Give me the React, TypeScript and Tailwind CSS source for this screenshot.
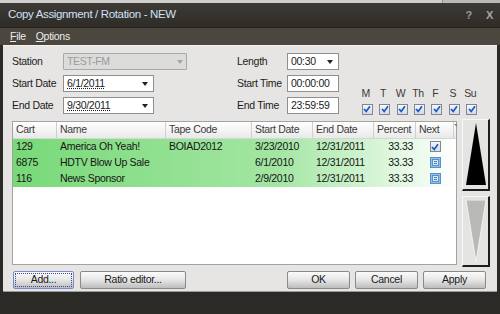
function DropArrow() {
    return <span className="ml-auto w-0 h-0 border-x-[3px] border-x-transparent border-t-[4px] border-t-[#222]" />
}

function Check() {
    return (
        <span className="w-[11px] h-[11px] border border-[#7f8794] bg-gradient-to-b from-[#f5f7fa] to-[#d5dbe4] flex items-center justify-center">
            <svg width="8" height="8" viewBox="0 0 8 8">
                <path d="M1 4 L3.2 6.4 L7 1.2" stroke="#1b58c4" strokeWidth="1.7" fill="none" />
            </svg>
        </span>
    )
}

function ListBox() {
    return (
        <span className="w-[11px] h-[11px] border border-[#5d8fc7] bg-[#8cc0ef] flex items-center justify-center">
            <span className="w-[7px] h-[7px] bg-[#d6ebfb] border border-[#5d8fc7] flex flex-col justify-center gap-[1px] px-[1px]">
                <span className="h-[1px] bg-[#4a7fb8]" />
                <span className="h-[1px] bg-[#4a7fb8]" />
            </span>
        </span>
    )
}

function Button({ label, w, focus }: { label: string; w: string; focus?: boolean }) {
    return (
        <div className={`${w} h-[18px] rounded-[2px] border ${focus ? "border-[#7a8cc8]" : "border-[#8a8a8a]"} bg-gradient-to-b from-[#fbfbfb] via-[#e6e6e6] to-[#bdbdbd] flex items-center justify-center text-[#1a1a1a] p-[1px]`}>
            <div className={`w-full h-full flex items-center justify-center ${focus ? "border border-dotted border-[#3a4a9a]" : ""}`}>
                {label}
            </div>
        </div>
    )
}

const rows = [
    { cart: "129", name: "America Oh Yeah!", tape: "BOIAD2012", start: "3/23/2010", end: "12/31/2011", pct: "33.33", next: true },
    { cart: "6875", name: "HDTV Blow Up Sale", tape: "", start: "6/1/2010", end: "12/31/2011", pct: "33.33", next: false },
    { cart: "116", name: "News Sponsor", tape: "", start: "2/9/2010", end: "12/31/2011", pct: "33.33", next: false },
]

const cols = [
    { label: "Cart", w: "w-[44px]" },
    { label: "Name", w: "w-[109px]" },
    { label: "Tape Code", w: "w-[86px]" },
    { label: "Start Date", w: "w-[61px]" },
    { label: "End Date", w: "w-[61px]" },
    { label: "Percent", w: "w-[42px]" },
    { label: "Next", w: "w-[38px]" },
]

export default function App() {
    return (
        <div className="w-[500px] h-[314px] overflow-hidden flex flex-col bg-[#2c2a27] font-['Liberation_Sans',Arial,sans-serif] text-[10.5px] tracking-[-0.3px] leading-none">
            <div className="h-[3px] bg-[#cfcfcd] flex justify-end">
                <div className="w-[58px] h-[3px] bg-[#b9b9b6] border-l border-[#8d8d8a]" />
            </div>
            {/* title bar */}
            <div className="h-[25px] bg-gradient-to-b from-[#3e3b36] to-[#2f2c28] border-b border-[#24221f] flex items-center pl-[8px] pr-[7px]">
                <span className="text-[11.5px] tracking-[-0.35px] text-[#cfe0f6]">Copy Assignment / Rotation - NEW</span>
                <span className="ml-auto text-[11px] font-bold text-[#9a9a98]">?</span>
                <span className="ml-[14px] text-[11px] font-bold text-[#a6a6a4]">X</span>
            </div>
            {/* menu */}
            <div className="h-[17px] bg-[#4b463e] flex items-center gap-[10px] px-[10px] text-[#ececec]">
                <span><span className="underline">F</span>ile</span>
                <span><span className="underline">O</span>ptions</span>
            </div>
            {/* body */}
            <div className="h-[246px] mx-[3px] bg-[#e6e5e3] border-t border-[#f4f4f2] flex flex-col pt-[7px] pl-[9px] pr-[6px] text-[#1c1c1c]">
                <div className="flex">
                    <div className="flex flex-col gap-[5px] w-[175px]">
                        <div className="flex items-center h-[17px]">
                            <span className="w-[51px]">Station</span>
                            <div className="w-[124px] h-[17px] border border-[#a9a9a9] bg-[#dcdcdb] rounded-[1px] flex items-center px-[3px] text-[#9b9b9b]">
                                TEST-FM
                                <span className="ml-auto w-0 h-0 border-x-[3px] border-x-transparent border-t-[4px] border-t-[#a5a5a5]" />
                            </div>
                        </div>
                        <div className="flex items-center h-[17px]">
                            <span className="w-[51px]">Start Date</span>
                            <div className="w-[91px] h-[17px] border border-[#8f8f8f] bg-white flex items-center px-[3px] pr-[5px]">
                                <span className="underline decoration-dotted">6/1/2011</span>
                                <DropArrow />
                            </div>
                        </div>
                        <div className="flex items-center h-[17px]">
                            <span className="w-[51px]">End Date</span>
                            <div className="w-[91px] h-[17px] border border-[#8f8f8f] bg-white flex items-center px-[3px] pr-[5px]">
                                <span className="underline decoration-dotted">9/30/2011</span>
                                <DropArrow />
                            </div>
                        </div>
                    </div>
                    <div className="ml-[50px] flex flex-col gap-[5px] w-[102px]">
                        <div className="flex items-center h-[17px]">
                            <span className="w-[50px]">Length</span>
                            <div className="w-[52px] h-[17px] border border-[#8f8f8f] bg-white flex items-center px-[3px] pr-[5px]">
                                00:30
                                <DropArrow />
                            </div>
                        </div>
                        <div className="flex items-center h-[17px]">
                            <span className="w-[50px]">Start Time</span>
                            <div className="w-[52px] h-[17px] border border-[#8f8f8f] bg-white flex items-center px-[3px]">00:00:00</div>
                        </div>
                        <div className="flex items-center h-[17px]">
                            <span className="w-[50px]">End Time</span>
                            <div className="w-[52px] h-[17px] border border-[#8f8f8f] bg-white flex items-center px-[3px]">23:59:59</div>
                        </div>
                    </div>
                    <div className="ml-[18px] mt-[35px] grid grid-cols-7 w-[122px] gap-y-[5px] text-[#3a3a3a]">
                        {["M", "T", "W", "Th", "F", "S", "Su"].map((d) => (
                            <span key={d} className="text-center">{d}</span>
                        ))}
                        {["M", "T", "W", "Th", "F", "S", "Su"].map((d) => (
                            <span key={d + "c"} className="flex justify-center pl-[3px]"><Check /></span>
                        ))}
                    </div>
                </div>

                <div className="flex mt-[4px] gap-[5px]">
                    <div className="mt-[2px] w-[445px] h-[144px] border border-[#a3a3a3] bg-white">
                        <div className="flex h-[17px] bg-gradient-to-b from-[#ffffff] to-[#e9e9e9] border-b border-[#d6d6d6] text-[#3b3b3b]">
                            {cols.map((c) => (
                                <div key={c.label} className={`${c.w} shrink-0 border-r border-[#cfcfcf] flex items-center px-[3px]`}>{c.label}</div>
                            ))}
                            <div className="relative flex-1">
                                <span className="absolute left-0 top-[2px] w-0 h-0 border-l-[3px] border-l-transparent border-t-[3px] border-t-[#7a7a7a]" />
                            </div>
                        </div>
                        {rows.map((r) => (
                            <div key={r.cart} className="flex h-[16px] bg-gradient-to-r from-[#78d978] via-[#a3e6a3] via-60% to-white text-[#151515]">
                                <div className="w-[44px] px-[3px] flex items-center">{r.cart}</div>
                                <div className="w-[109px] px-[3px] flex items-center">{r.name}</div>
                                <div className="w-[86px] px-[3px] flex items-center">{r.tape}</div>
                                <div className="w-[61px] px-[3px] flex items-center">{r.start}</div>
                                <div className="w-[61px] px-[3px] flex items-center">{r.end}</div>
                                <div className="w-[42px] px-[3px] flex items-center justify-end">{r.pct}</div>
                                <div className="w-[38px] flex items-center justify-center">{r.next ? <Check /> : <ListBox />}</div>
                            </div>
                        ))}
                    </div>
                    <div className="flex flex-col gap-[5px]">
                        <div className="w-[28px] h-[72px] bg-[#e4e4e2] border-t border-l border-[#f7f7f5] border-r-2 border-b-2 border-r-[#1e1e1e] border-b-[#1e1e1e] flex items-center justify-center">
                            <svg width="22" height="62" viewBox="0 0 22 62">
                                <polygon points="11,0 21,62 1,62" fill="#000" />
                            </svg>
                        </div>
                        <div className="w-[28px] h-[71px] bg-[#e4e4e2] border-t border-l border-[#f7f7f5] border-r-2 border-b-2 border-r-[#1e1e1e] border-b-[#1e1e1e] flex items-center justify-center">
                            <svg width="22" height="62" viewBox="0 0 22 62">
                                <polygon points="1,0 21,0 11,62" fill="#b9b9b6" stroke="#f2f2f0" strokeWidth="1" />
                            </svg>
                        </div>
                    </div>
                </div>

                <div className="flex mt-[4px] pl-[1px]">
                    <Button label="Add..." w="w-[61px]" focus />
                    <div className="ml-[6px]"><Button label="Ratio editor..." w="w-[106px]" /></div>
                    <div className="ml-auto flex gap-[5px] mr-[5px]">
                        <Button label="OK" w="w-[63px]" />
                        <Button label="Cancel" w="w-[63px]" />
                        <Button label="Apply" w="w-[63px]" />
                    </div>
                </div>
            </div>
            <div className="h-[1px] mx-[3px] bg-[#9c9b98]" />
        </div>
    )
}
